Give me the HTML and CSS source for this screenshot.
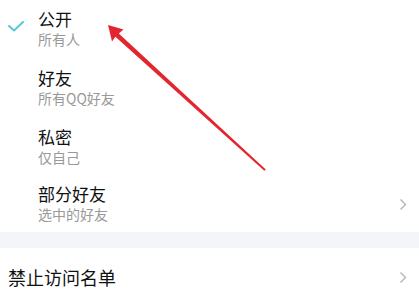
FILE: index.html
```html
<!DOCTYPE html>
<html lang="zh-CN">
<head>
    <meta charset="UTF-8">
    <meta name="viewport" content="width=device-width, initial-scale=1.0">
    <title>谁可以看</title>
    <link rel="stylesheet" href="styles.css">
</head>
<body>
    <div class="page">

        <ul class="options">
            <li class="option selected">
                <span class="check">
                    <svg width="16" height="11" viewBox="0 0 16 11"><path d="M1 5 L6 9.5 L15 1" fill="none" stroke="#5cc6dc" stroke-width="2" stroke-linecap="round" stroke-linejoin="round"/></svg>
                </span>
                <div class="text">
                    <p class="title">公开</p>
                    <p class="sub">所有人</p>
                </div>
            </li>
            <li class="option">
                <div class="text">
                    <p class="title">好友</p>
                    <p class="sub">所有QQ好友</p>
                </div>
            </li>
            <li class="option">
                <div class="text">
                    <p class="title">私密</p>
                    <p class="sub">仅自己</p>
                </div>
            </li>
            <li class="option">
                <div class="text">
                    <p class="title">部分好友</p>
                    <p class="sub">选中的好友</p>
                </div>
                <span class="chevron">
                    <svg width="8" height="13" viewBox="0 0 8 13"><path d="M1.5 1.5 L6.5 6.5 L1.5 11.5" fill="none" stroke="#b4b4b4" stroke-width="1.4"/></svg>
                </span>
            </li>
        </ul>

        <div class="divider"></div>

        <div class="blacklist">
            <span class="label">禁止访问名单</span>
            <span class="chevron">
                <svg width="8" height="13" viewBox="0 0 8 13"><path d="M1.5 1.5 L6.5 6.5 L1.5 11.5" fill="none" stroke="#b4b4b4" stroke-width="1.4"/></svg>
            </span>
        </div>

        <!-- red annotation arrow drawn over the list -->
        <svg class="arrow" width="419" height="305" viewBox="0 0 419 305">
            <polygon points="108,25 123.5,29.5 118.8,33.6 265.8,169.4 264.3,170.8 115.4,36.8 112,41.5" fill="#e3262e"/>
        </svg>
    </div>
</body>
</html>
```

FILE: styles.css
```css
body {
    margin: 0;
    background: #ffffff;
    font-family: "Noto Sans CJK SC", "Noto Sans", sans-serif;
    color: #111111;
}

.page {
    position: relative;
    width: 419px;
    height: 305px;
    overflow: hidden;
}

.options {
    list-style: none;
    margin: 0;
    padding: 0;
}

.option {
    display: flex;
    align-items: center;
    height: 59px;
    padding-left: 38px;
    padding-right: 12px;
    position: relative;
    box-sizing: border-box;
}

.option:first-child {
    margin-top: -1px;
}

.option:last-child {
    height: 56px;
}

.check {
    position: absolute;
    left: 8px;
    top: 22px;
    line-height: 0;
}

.text {
    flex: 1;
}

.title {
    margin: 0;
    font-size: 17px;
    line-height: 21px;
}

.sub {
    margin: 0;
    font-size: 14px;
    line-height: 21px;
    color: #999999;
}

.chevron {
    line-height: 0;
}

.divider {
    height: 16px;
    background: #f3f5f8;
}

.blacklist {
    display: flex;
    align-items: center;
    height: 58px;
    padding-left: 8px;
    padding-right: 12px;
}

.blacklist .label {
    flex: 1;
    font-size: 18px;
}

.arrow {
    position: absolute;
    left: 0;
    top: 0;
    pointer-events: none;
}
```
